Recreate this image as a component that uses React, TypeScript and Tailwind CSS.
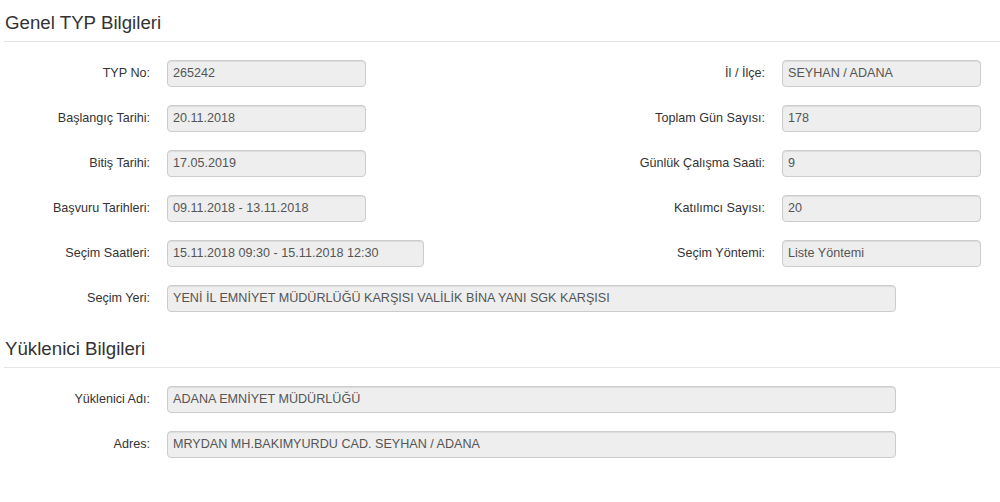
const font = { fontFamily: '"Liberation Sans", Arial, sans-serif' }

function Field({ value, width }: { value: string; width: string }) {
  return (
    <div
      className={`${width} h-[27px] flex items-center px-[5px] bg-[#eeeeee] border border-[#cccccc] rounded-[4px] shadow-[inset_0_1px_1px_rgba(0,0,0,0.075)] text-[12.6px] text-[#555555] whitespace-nowrap overflow-hidden`}
    >
      {value}
    </div>
  )
}

function Pair({ label, value, labelW, inputW }: { label: string; value: string; labelW: string; inputW: string }) {
  return (
    <div className="flex items-center gap-[17px]">
      <div className={`${labelW} text-right text-[12.6px] text-[#333333] whitespace-nowrap`}>{label}</div>
      <Field value={value} width={inputW} />
    </div>
  )
}

function Heading({ title, className = "" }: { title: string; className?: string }) {
  return (
    <div className={`pl-[1px] pb-[8px] border-b border-[#e5e5e5] text-[18.7px] leading-[20px] text-[#333333] ${className}`}>
      {title}
    </div>
  )
}

const rows: { left: [string, string, string]; right?: [string, string] }[] = [
  { left: ["TYP No:", "265242", "w-[199px]"], right: ["İl / İlçe:", "SEYHAN / ADANA"] },
  { left: ["Başlangıç Tarihi:", "20.11.2018", "w-[199px]"], right: ["Toplam Gün Sayısı:", "178"] },
  { left: ["Bitiş Tarihi:", "17.05.2019", "w-[199px]"], right: ["Günlük Çalışma Saati:", "9"] },
  { left: ["Başvuru Tarihleri:", "09.11.2018 - 13.11.2018", "w-[199px]"], right: ["Katılımcı Sayısı:", "20"] },
  { left: ["Seçim Saatleri:", "15.11.2018 09:30 - 15.11.2018 12:30", "w-[257px]"], right: ["Seçim Yöntemi:", "Liste Yöntemi"] },
  { left: ["Seçim Yeri:", "YENİ İL EMNİYET MÜDÜRLÜĞÜ KARŞISI VALİLİK BİNA YANI SGK KARŞISI", "w-[729px]"] },
]

export default function App() {
  return (
    <div className="w-[1000px] h-[502px] bg-white pl-[4px] pt-[13px]" style={font}>
      <Heading title="Genel TYP Bilgileri" />
      <div className="mt-[18px] flex flex-col gap-[18px]">
        {rows.map((r) =>
          r.right ? (
            <div key={r.left[0]} className="flex items-center">
              <div className="w-[460px] shrink-0">
                <Pair label={r.left[0]} value={r.left[1]} labelW="w-[146px]" inputW={r.left[2]} />
              </div>
              <Pair label={r.right[0]} value={r.right[1]} labelW="w-[301px]" inputW="w-[199px]" />
            </div>
          ) : (
            <Pair key={r.left[0]} label={r.left[0]} value={r.left[1]} labelW="w-[146px]" inputW={r.left[2]} />
          )
        )}
      </div>

      <Heading title="Yüklenici Bilgileri" className="mt-[27px]" />
      <div className="mt-[18px] flex flex-col gap-[18px]">
        <Pair label="Yüklenici Adı:" value="ADANA EMNİYET MÜDÜRLÜĞÜ" labelW="w-[146px]" inputW="w-[729px]" />
        <Pair label="Adres:" value="MRYDAN MH.BAKIMYURDU CAD. SEYHAN / ADANA" labelW="w-[146px]" inputW="w-[729px]" />
      </div>
    </div>
  )
}
